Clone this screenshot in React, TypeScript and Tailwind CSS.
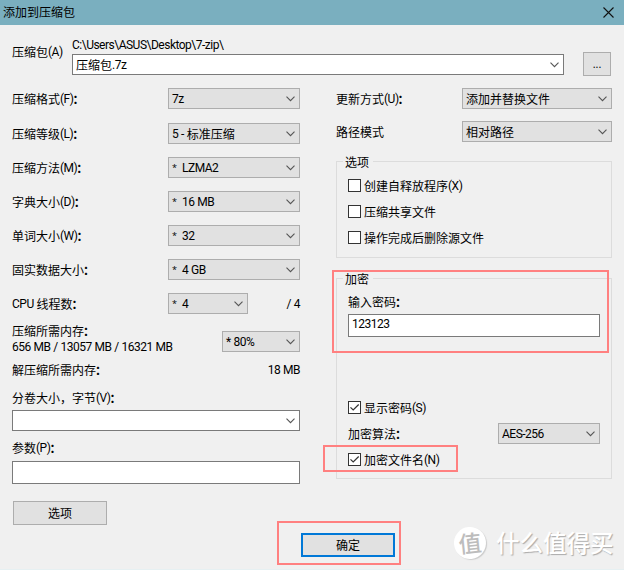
import type { ReactNode } from 'react';
import clsx from 'clsx';

const methodRows = [
  { label: '压缩格式(F)：', value: '7z' },
  { label: '压缩等级(L)：', value: '5 - 标准压缩' },
  { label: '压缩方法(M)：', value: 'LZMA2', auto: true },
  { label: '字典大小(D)：', value: '16 MB', auto: true },
  { label: '单词大小(W)：', value: '32', auto: true },
  { label: '固实数据大小：', value: '4 GB', auto: true }
];

const options = ['创建自释放程序(X)', '压缩共享文件', '操作完成后删除源文件'];

// Latin runs are set a little tighter than the Chinese text around them
function Text({ children, className }: { children: string; className?: string }) {
  return (
    <span className={clsx('whitespace-pre', className)}>
      {children.split(/([\x20-\x7e]+|：)/).map((part, i) => {
        if (part === '：') return <span key={i} className="relative top-px -left-px font-bold">：</span>;
        if (i % 2) return <span key={i} className="font-[Roboto] text-[12px] tracking-[-0.5px] [word-spacing:0.3px]">{part}</span>;
        return <span key={i} className="relative top-px">{part}</span>;
      })}
    </span>
  );
}

function Chevron() {
  return (
    <svg className="ml-auto shrink-0" width="9" height="6" viewBox="0 0 9 6" fill="none" stroke="#555" strokeWidth="1.1">
      <path d="M0.5 0.7L4.5 4.7L8.5 0.7" />
    </svg>
  );
}

function Select({ value, auto, light, className }: { value: string; auto?: boolean; light?: boolean; className?: string }) {
  return (
    <div
      className={clsx(
        'flex h-[21px] shrink-0 items-center border pl-[3px] pr-1',
        light ? 'border-[#7a7a7a] bg-white' : 'border-[#adadad] bg-[#e1e1e1]',
        className
      )}
    >
      {auto && <span className="w-[10px] text-[9px]">*</span>}
      <Text>{value}</Text>
      <Chevron />
    </div>
  );
}

function Checkbox({ label, checked }: { label: string; checked?: boolean }) {
  return (
    <div className="flex h-[13px] items-center gap-[3px]">
      <span className="flex h-[13px] w-[13px] items-center justify-center border border-[#333] bg-white">
        {checked && (
          <svg width="11" height="11" viewBox="0 0 11 11" fill="none" stroke="#333" strokeWidth="1.2">
            <path d="M1.5 5.3L4.2 8L9.7 2.5" />
          </svg>
        )}
      </span>
      <Text>{label}</Text>
    </div>
  );
}

function Group({ title, className, children }: { title: string; className: string; children: ReactNode }) {
  return (
    <div className={clsx('border border-[#dcdcdc] px-[11px]', className)}>
      <div className="-mt-[9px] -ml-[5px] h-[18px] w-[30px] bg-[#f0f0f0] pl-[2px] leading-[20px]">{title}</div>
      {children}
    </div>
  );
}

function Highlight({ className }: { className: string }) {
  return <div className={clsx('pointer-events-none absolute border-2 border-[#ff8080]', className)} />;
}

export default function App() {
  return (
    <div className="relative h-[570px] w-[624px] overflow-hidden border-b border-[#e6f0f2] bg-[#f0f0f0] font-['Open_Sans','Noto_Sans_CJK_SC',sans-serif] text-[12px] leading-[18px] text-black">
      <header className="flex h-[25px] items-center justify-between bg-[#7aafbf] pl-[3px] pr-[10px]">
        <span>添加到压缩包</span>
        <svg width="11" height="11" viewBox="0 0 11 11" stroke="#111" strokeWidth="1.1">
          <path d="M0.5 0.5L10.5 10.5M10.5 0.5L0.5 10.5" />
        </svg>
      </header>

      <section className="flex h-[63px] pl-3 pr-[13px]">
        <Text className="mt-[18px] w-[60px]">压缩包(A)</Text>
        <div className="mt-[11px] w-[492px]">
          <Text className="block">{'C:\\Users\\ASUS\\Desktop\\7-zip\\'}</Text>
          <Select value="压缩包.7z" light />
        </div>
        <button className="mt-[27px] ml-auto h-[24px] w-[28px] border border-[#adadad] bg-[#e1e1e1] text-[11px]">...</button>
      </section>

      <main className="flex justify-between pl-3 pr-3">
        <div className="w-[288px]">
          {methodRows.map((row, i) => (
            <div key={row.label} className={clsx('flex items-center justify-between', i === 0 ? 'mb-[14px]' : 'mb-[13px]')}>
              <Text>{row.label}</Text>
              <Select value={row.value} auto={row.auto} className="w-[132px]" />
            </div>
          ))}
          <div className="flex items-center">
            <Text className="w-[156px]">CPU 线程数：</Text>
            <Select value="4" auto className="w-[80px]" />
            <Text className="ml-auto">/ 4</Text>
          </div>
          <div className="mt-[9px] flex h-[32px] justify-between">
            <div className="leading-[16px]">
              <Text className="block">压缩所需内存：</Text>
              <Text className="block">656 MB / 13057 MB / 16321 MB</Text>
            </div>
            <Select value="* 80%" className="mt-2 w-[78px]" />
          </div>
          <div className="mt-[6px] flex justify-between">
            <Text>解压缩所需内存：</Text>
            <Text>18 MB</Text>
          </div>
          <div className="mt-[10px]">
            <Text className="block">分卷大小，字节(V)：</Text>
            <Select value="" light className="mt-[3px]" />
          </div>
          <div className="mt-[8px]">
            <Text className="block">参数(P)：</Text>
            <div className="mt-[4px] h-[23px] border border-[#7a7a7a] bg-white" />
          </div>
          <button className="mt-[17px] ml-px h-[24px] w-[94px] border border-[#adadad] bg-[#e1e1e1] leading-[24px]">选项</button>
        </div>

        <div className="w-[276px]">
          <div className="flex items-center justify-between">
            <Text>更新方式(U)：</Text>
            <Select value="添加并替换文件" className="w-[150px]" />
          </div>
          <div className="mt-3 flex items-center justify-between">
            <Text>路径模式</Text>
            <Select value="相对路径" className="w-[150px]" />
          </div>

          <Group title="选项" className="mt-[19px] h-[97px]">
            <div className="mt-[8px] flex flex-col gap-[13px]">
              {options.map((label) => (
                <Checkbox key={label} label={label} />
              ))}
            </div>
          </Group>

          <Group title="加密" className="mt-[20px] h-[201px]">
            <Text className="mt-[5px] block">输入密码：</Text>
            <div className="mt-[3px] h-[23px] border border-[#7a7a7a] bg-white pl-[3px] leading-[17px]">
              <Text>123123</Text>
            </div>
            <div className="mt-[64px]">
              <Checkbox label="显示密码(S)" checked />
            </div>
            <div className="mt-[9px] mb-[9px] flex items-center justify-between">
              <Text>加密算法：</Text>
              <Select value="AES-256" className="w-[102px]" />
            </div>
            <Checkbox label="加密文件名(N)" checked />
          </Group>
        </div>
      </main>

      <footer className="mt-[2px] flex items-start">
        <button className="mt-[6px] ml-[301px] h-[24px] w-[94px] border-2 border-[#0078d7] bg-[#e1e1e1] leading-[22px]">确定</button>
        <div className="ml-[59px] flex items-center gap-[10px] font-medium">
          <span className="flex h-[32px] w-[32px] -rotate-6 items-center justify-center rounded-full bg-white text-[23px] leading-none text-[#bdbdbd] shadow-[1px_1px_1px_#ccc]">
            值
          </span>
          <span className="whitespace-nowrap text-[23.5px] leading-[32px] text-white [text-shadow:1px_1px_1px_#aaa]">什么值得买</span>
        </div>
      </footer>

      <Highlight className="left-[332px] top-[270px] h-[83px] w-[277px]" />
      <Highlight className="left-[323px] top-[445px] h-[27px] w-[135px]" />
      <Highlight className="left-[277px] top-[521px] h-[44px] w-[124px]" />
    </div>
  );
}
